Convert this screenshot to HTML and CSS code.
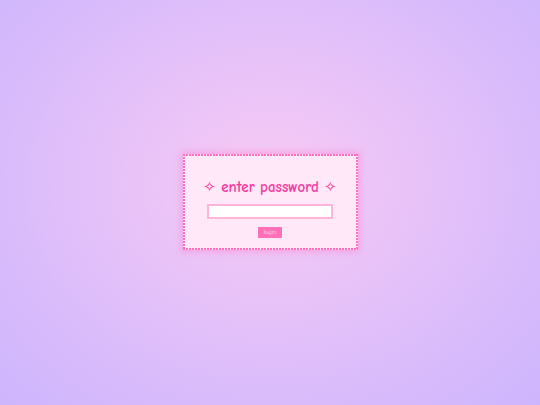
FILE: index.html
```html
<!DOCTYPE html>
<html>
<head>
<meta charset="utf-8">
<link rel="stylesheet" href="styles.css">
</head>
<body>
<div class="box">
  <h1 class="title"><span class="star">✧</span> enter password <span class="star">✧</span></h1>
  <input class="pw" type="password">
  <button class="btn">login</button>
</div>
</body>
</html>
```
FILE: styles.css
```css
html, body { margin: 0; height: 100%; }
body {
  display: flex;
  align-items: center;
  justify-content: center;
  background: radial-gradient(ellipse farthest-corner at 50% 45%, #f8caf4 0%, #e9c3f8 35%, #d9bbfb 70%, #cdb5fd 100%);
  font-family: "Comic Sans MS", "Comic Neue", cursive, sans-serif;
}
.box {
  width: 175px;
  height: 96px;
  box-sizing: border-box;
  background:
    repeating-linear-gradient(90deg, #ff6fbb 0 2px, transparent 2px 3px) top left / 100% 2px no-repeat,
    repeating-linear-gradient(90deg, #ff6fbb 0 2px, transparent 2px 3px) bottom left / 100% 2px no-repeat,
    repeating-linear-gradient(180deg, #ff6fbb 0 2px, transparent 2px 3px) top left / 2px 100% no-repeat,
    repeating-linear-gradient(180deg, #ff6fbb 0 2px, transparent 2px 3px) top right / 2px 100% no-repeat,
    #ffe8f8;
  box-shadow: 0 0 6px 2px rgba(255, 130, 210, 0.5);
  display: flex;
  flex-direction: column;
  align-items: center;
  margin-bottom: 1px;
}
.title {
  margin: 23px 0 7px;
  font-size: 15px;
  line-height: 20px;
  font-weight: bold;
  color: #f23c9f;
  white-space: nowrap;
}
.star {
  font-family: "DejaVu Sans", sans-serif;
  font-weight: bold;
  font-size: 15px;
}
.pw {
  width: 126px;
  height: 15px;
  box-sizing: border-box;
  border: 2px solid #ffb4dc;
  background: #fff;
  padding: 0;
  margin: 0 0 8px;
  outline: none;
}
.btn {
  width: 24px;
  height: 11px;
  box-sizing: border-box;
  border: none;
  padding: 0;
  background: #ff70b8;
  color: #ffc7e6;
  font-family: "Liberation Sans", Arial, sans-serif;
  font-size: 6px;
  line-height: 11px;
}
```
